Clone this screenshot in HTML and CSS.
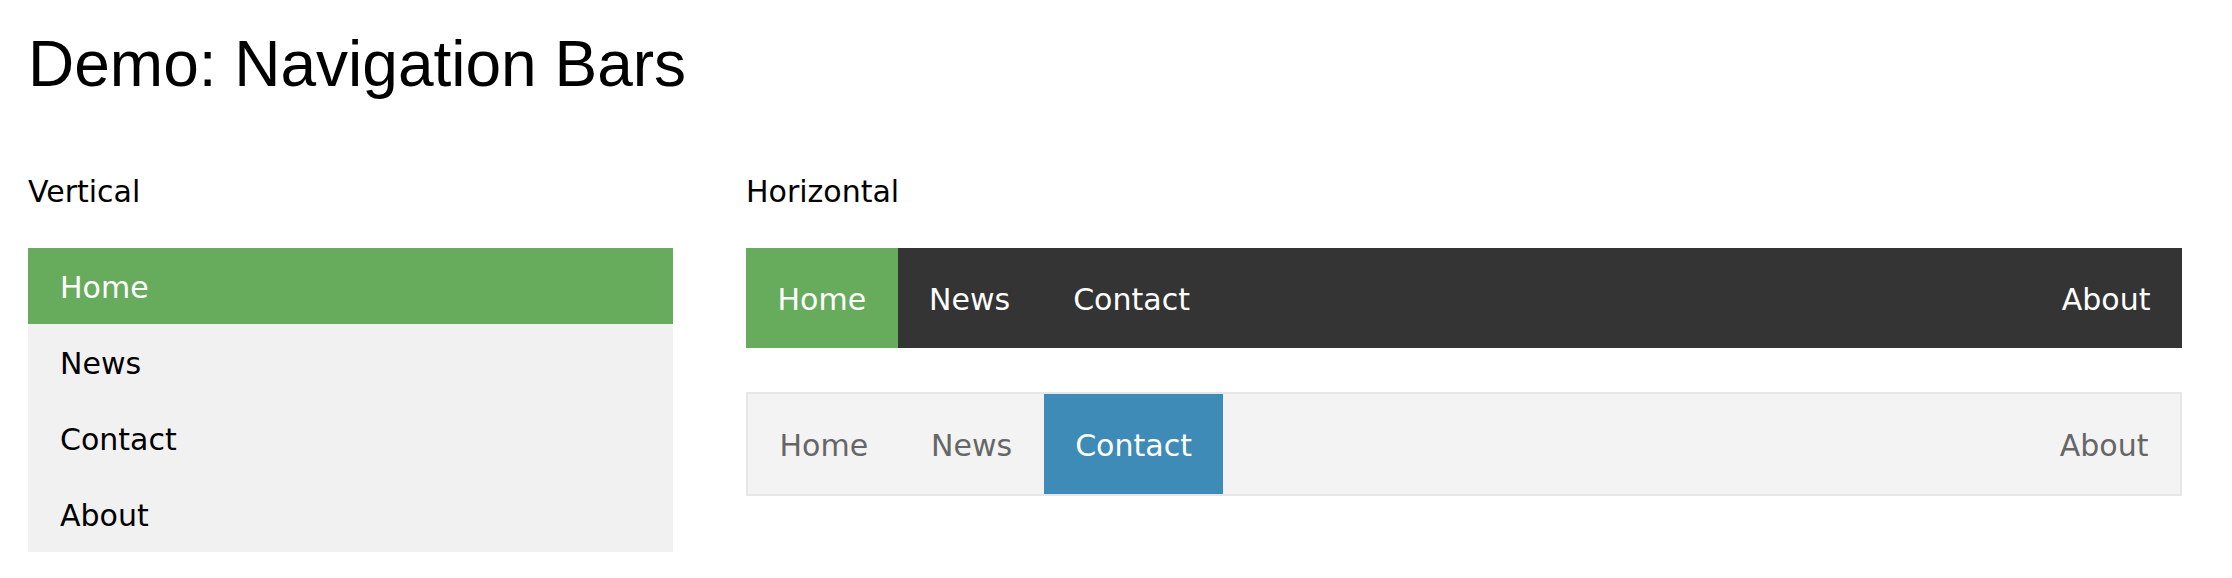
FILE: index.html
```html
<!DOCTYPE html>
<html lang="en">
<head>
<meta charset="utf-8">
<title>Demo: Navigation Bars</title>
<link rel="stylesheet" href="styles.css">
</head>
<body>
<div class="page">
  <h1 class="title">Demo: Navigation Bars</h1>
  <div class="columns">
    <section class="col">
      <div class="label">Vertical</div>
      <ul class="vnav">
        <li><a class="active" href="#">Home</a></li>
        <li><a href="#">News</a></li>
        <li><a href="#">Contact</a></li>
        <li><a href="#">About</a></li>
      </ul>
    </section>
    <section class="col">
      <div class="label">Horizontal</div>
      <ul class="hnav dark">
        <li><a class="active" href="#">Home</a></li>
        <li><a href="#">News</a></li>
        <li><a href="#">Contact</a></li>
        <li class="push"><a href="#">About</a></li>
      </ul>
      <ul class="hnav light">
        <li><a href="#">Home</a></li>
        <li><a href="#">News</a></li>
        <li><a class="active" href="#">Contact</a></li>
        <li class="push"><a href="#">About</a></li>
      </ul>
    </section>
  </div>
</div>
</body>
</html>
```

FILE: styles.css
```css
html, body {
  margin: 0;
  padding: 0;
  background: #ffffff;
}

.page {
  padding: 27px 0 0 28px;
}

.title {
  margin: 0 0 73px 0;
  font-family: "Liberation Sans", Arial, sans-serif;
  font-weight: normal;
  font-size: 64px;
  line-height: 74px;
  color: #000;
}

.columns {
  display: grid;
  grid-template-columns: 645px 1436px;
  column-gap: 73px;
  align-items: start;
}

.label {
  font-family: "DejaVu Sans", Verdana, sans-serif;
  font-size: 30px;
  line-height: 35px;
  color: #000;
  margin-bottom: 39px;
}

ul {
  list-style: none;
  margin: 0;
  padding: 0;
}

a {
  text-decoration: none;
  font-family: "DejaVu Sans", Verdana, sans-serif;
  font-size: 30px;
  line-height: 36px;
  display: block;
}

.vnav {
  background: #f1f1f1;
}

.vnav a {
  color: #000;
  padding: 22px 32px 18px 32px;
}

.vnav a.active {
  background: #67ab5c;
  color: #fff;
}

.hnav {
  display: flex;
}

.hnav a {
  padding: 34px 31.5px 30px 31.5px;
}

.hnav .push {
  margin-left: auto;
}

.dark {
  background: #343434;
  margin-bottom: 44px;
}

.dark a {
  color: #fff;
}

.dark a.active {
  background: #67ab5c;
}

.light {
  background: #f3f3f3;
  border: 2px solid #e6e6e6;
}

.light a {
  color: #666;
}

.light a.active {
  background: #3f8bb8;
  color: #fff;
}
```
